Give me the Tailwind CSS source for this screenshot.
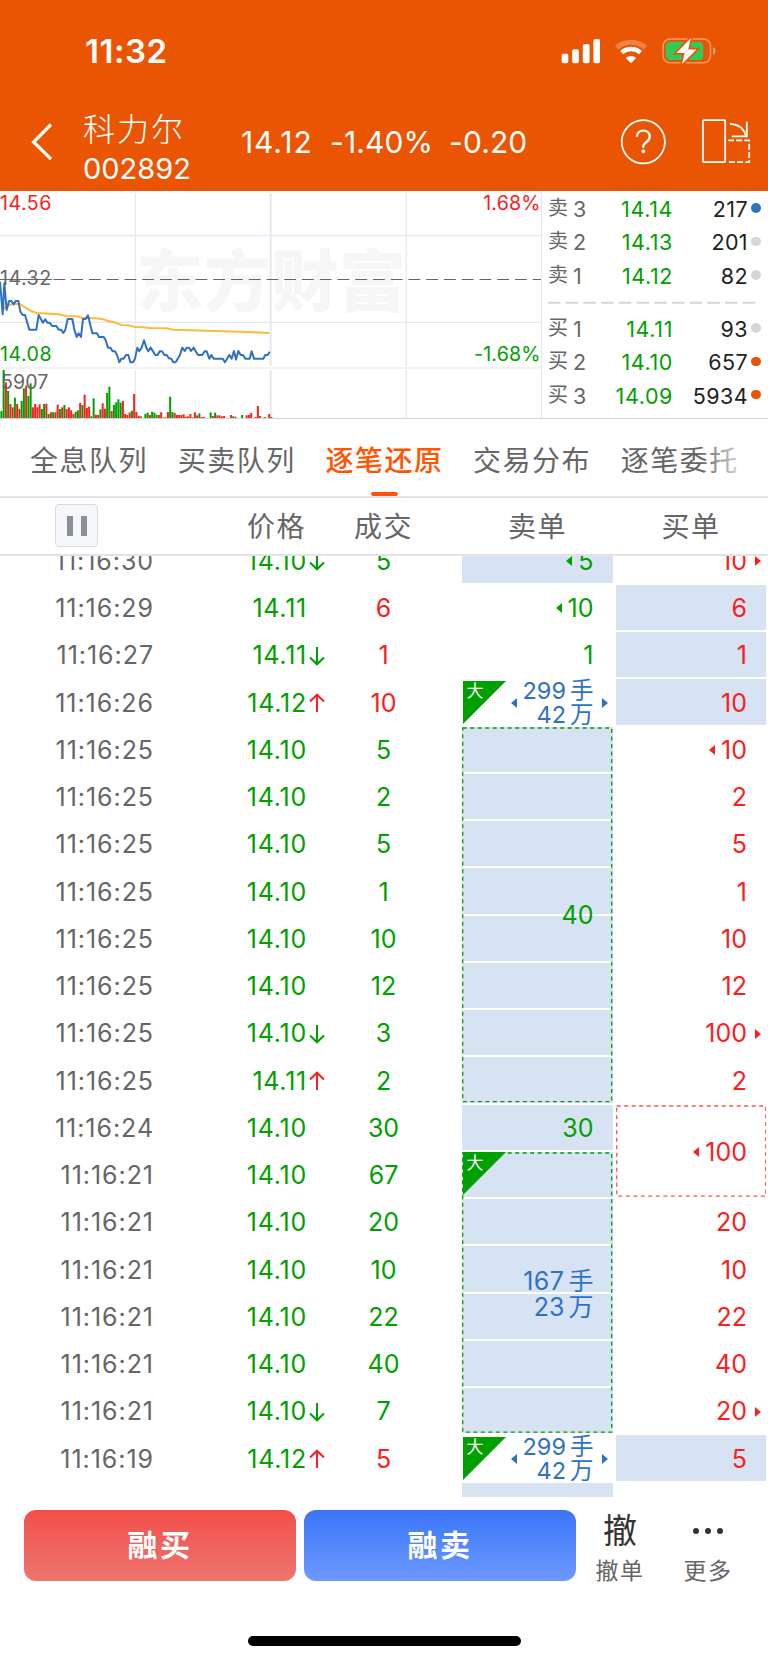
<!DOCTYPE html>
<html lang="zh-CN">
<head>
    <meta charset="UTF-8">
    <meta name="viewport" content="width=device-width, initial-scale=1.0">
    <script src="https://cdn.jsdelivr.net/npm/@tailwindcss/browser@4"></script>
    <title>科力尔 002892</title>
</head>
<body class="w-[768px] h-[1663px] overflow-hidden bg-white text-[#666] font-['Inter','Noto_Sans_CJK_SC',sans-serif] flex flex-col">

    <!-- Header -->
    <header class="h-[191px] shrink-0 bg-[#ea5504] text-white">
        <!-- Status bar -->
        <div class="h-[102px] flex items-center justify-between pl-[85px] pr-[51px]">
            <span class="text-[33px] font-semibold leading-none tracking-[0.5px]">11:32</span>
            <svg class="w-[156px] h-[28px]" viewBox="561 37 156 28" fill="none">
                <g fill="#fff">
                    <rect x="561.7" y="53.8" width="6.6" height="9.4" rx="2" />
                    <rect x="572.1" y="49.2" width="6.8" height="14" rx="2" />
                    <rect x="582.8" y="43.9" width="6.8" height="19.3" rx="2" />
                    <rect x="593.4" y="38.9" width="6.6" height="24.3" rx="2" />
                </g>
                <path d="M616.6 47.6a22 22 0 0 1 29 0" stroke="#f0814a" stroke-width="5" />
                <path d="M621.7 52.6a14.2 14.2 0 0 1 18.8 0" stroke="#fff" stroke-width="4.6" />
                <path d="M631 63.3l-5.2-5.3a7.6 7.6 0 0 1 10.4 0z" fill="#fff" />
                <rect x="663.1" y="39" width="47.4" height="23.8" rx="7" stroke="#f39a68" stroke-width="1.5" />
                <path d="M713 47.2c3.4 1 3.4 6.6 0 7.6z" fill="#f39a68" />
                <rect x="665.7" y="41.8" width="37.6" height="18.2" rx="4.4" fill="#34c759" />
                <path d="M691 38L676.3 53h8.400l-2.700 11L696.500 49.500h-8.300z" fill="#fff" stroke="#ea5504" stroke-width="3.400" paint-order="stroke" />
            </svg>
        </div>
        <!-- Title bar -->
        <div class="h-[88px] flex items-center pl-[30px] pr-[16px]">
            <svg class="w-6 h-10 mt-[-9px]" viewBox="30 122 24 40" fill="none" stroke="#fff" stroke-width="3.200"><path d="M51 124.5L33.6 142L51 159.2" /></svg>
            <div class="ml-[29px] w-[158px] mt-[6px]">
                <div class="text-[32px] leading-[39px] font-light tracking-[2px]">科力尔</div>
                <div class="text-[29px] leading-[39px] tracking-[0px]">002892</div>
            </div>
            <div class="flex text-[30px] leading-none mt-[-8px]">
                <span class="w-[89px] tracking-[0.9px]">14.12</span>
                <span class="w-[119px] tracking-[0.1px]">-1.40%</span>
                <span class="tracking-[0.1px]">-0.20</span>
            </div>
            <svg class="w-[134px] h-[48px] ml-auto mt-[-8px]" viewBox="618 118 134 48" fill="none" stroke="#fff" stroke-width="1.8">
                <circle cx="643.3" cy="141.8" r="21.6" />
                <path d="M637 136.8c0-3.7 2.7-6.2 6.3-6.2s6.4 2.4 6.4 5.8c0 2.8-1.4 4.3-3.5 5.8-2.1 1.4-3 2.5-3 4.9v.6" stroke-width="2.3" />
                <circle cx="643.3" cy="151.3" r="1.5" fill="#fff" stroke-width="1" />
                <rect x="703" y="120.2" width="22.2" height="42" rx="1" />
                <path d="M730 123.8c8 .3 14 4.500 16 12.500M746.800 121.700v14.600H731.800" />
                <path d="M728 140.300h21.200v21.900H728" stroke-dasharray="6 2.200" />
            </svg>
        </div>
    </header>

    <!-- Chart and order book -->
    <section class="h-[228px] shrink-0 flex border-b border-[#d4d5de]">
        <svg class="w-[542px] h-[227px] shrink-0 overflow-hidden" viewBox="0 1 542 227" fill="none">
            <text x="136" y="115.500" font-size="67" font-weight="900" fill="#f6f6f6" textLength="270">东方财富</text>
            <g stroke="#e5e8f0" stroke-width="1.2">
                <path d="M0 45.700H541M0 132.400H541M135.500 3V176M406.300 3V176M135.500 180V228M406.300 180V228" />
                <path d="M270.700 3V176M270.700 180V228" stroke-width="2" />
                <path d="M0 178H541M541.400 0V228" />
            </g>
            <path d="M0 89.500H52" stroke="#666" />
            <path d="M53.500 89.500H541" stroke="#666" stroke-width="1.200" stroke-dasharray="11.800 5.950" />
            <g id="volume"></g>
            <g transform="translate(0 -5) scale(.3333)" stroke-linejoin="round">
                <polyline stroke="#fdbb3c" stroke-width="6" points="8,340 12,372 22,362 40,357 60,357 75,367 95,379 110,384 150,386 175,388 200,393 230,394 245,398 290,400 310,403 325,408 340,411 365,420 385,421 405,426 430,427 450,429 500,430 520,434 575,436 640,438 720,440 760,442 808,444" />
                <polyline stroke="#2f72c0" stroke-width="6" points="0,290 8,388 13,295 20,375 27,348 34,348 41,358 47,348 55,348 61,380 68,390 75,390 88,434 109,434 116,390 129,413 136,403 142,413 149,413 156,423 169,423 176,434 183,434 190,444 196,434 203,402 217,402 223,434 230,456 236,445 243,456 249,402 257,402 264,391 277,445 291,445 297,456 311,456 317,466 324,488 331,488 338,499 345,499 351,510 358,532 364,521 371,521 378,510 385,510 391,532 399,532 405,521 412,488 418,499 425,488 432,466 439,488 445,499 452,488 466,510 473,510 479,499 486,499 493,510 500,510 507,520 514,521 520,532 527,532 540,510 547,488 554,498 560,488 567,488 573,498 581,488 594,510 607,510 614,499 620,499 628,521 634,510 641,521 668,521 675,532 688,510 695,521 702,498 708,524 715,498 722,510 729,510 736,521 749,521 755,499 762,521 790,521 796,510 803,510 809,500" />
            </g>
            <g font-size="19.600">
                <text x="0" y="20" fill="#fb2020" letter-spacing=".5">14.56</text>
                <text x="0" y="95" fill="#666" letter-spacing=".5">14.32</text>
                <text x="0" y="170.700" fill="#00a000" letter-spacing=".5">14.08</text>
                <text x="1" y="199" fill="#666" letter-spacing=".1">5907</text>
                <text x="540.800" y="20" fill="#fb2020" text-anchor="end" letter-spacing=".2">1.68%</text>
                <text x="540.800" y="170.700" fill="#00a000" text-anchor="end" letter-spacing=".2">-1.68%</text>
            </g>
        </svg>
        <div id="orderBook" class="flex-1 pt-[1.500px] pl-[6px]"></div>
    </section>

    <!-- Tabs -->
    <nav class="relative h-[79px] shrink-0 flex border-b-2 border-[#e2e3e9] pl-[30px] text-[28px] leading-[84px] tracking-[1.5px] whitespace-nowrap">
        <a class="w-[147.700px] shrink-0">全息队列</a>
        <a class="w-[147.700px] shrink-0">买卖队列</a>
        <a class="w-[147.700px] shrink-0 font-medium text-[#ff5500]">逐笔还原</a>
        <a class="w-[147.700px] shrink-0">交易分布</a>
        <a class="w-[140px] shrink-0">逐笔委托</a>
        <span class="absolute left-[370.500px] bottom-0 w-[27.500px] h-1 rounded-full bg-[#ff5500]"></span>
        <span class="absolute right-0 top-0 w-[68px] h-[74px] bg-linear-to-r from-white/0 to-white to-80%"></span>
    </nav>

    <!-- Table head -->
    <div class="h-[58px] shrink-0 flex items-center border-b-2 border-[#e2e3e9] pl-[55px] pt-[2px] text-[28px] tracking-[1.5px]">
        <button class="w-[43px] h-[43px] mt-[-3px] rounded-[4px] border border-[#d9dbe2] bg-[#f5f6f9] flex items-center justify-center gap-[8px]">
            <span class="w-[6px] h-5 bg-[#8d8d98]"></span>
            <span class="w-[6px] h-5 bg-[#8d8d98]"></span>
        </button>
        <span class="ml-[149px] w-[107px]">价格</span>
        <span class="w-[154px]">成交</span>
        <span class="w-[153.500px]">卖单</span>
        <span>买单</span>
    </div>

    <!-- Trades -->
    <main class="h-[940.500px] shrink-0 overflow-hidden">
        <div class="flex mt-[-19.360px] text-[25px]">
            <div id="trades" class="w-[462px] shrink-0"></div>
            <div id="sells" class="w-[150.500px] shrink-0 text-[#00a000]"></div>
            <div id="buys" class="w-[150px] shrink-0 ml-[3.500px] text-[#fb2020]"></div>
        </div>
    </main>

    <!-- Bottom bar -->
    <footer class="flex-1 pt-[13.500px] pl-6">
        <div class="flex text-center">
            <button class="w-[272px] h-[71px] rounded-[12px] bg-linear-to-b from-[#f24e49] to-[#ee746f] text-white text-[30px] font-bold tracking-[2.500px]">融买</button>
            <button class="w-[272px] h-[71px] ml-2 rounded-[12px] bg-linear-to-b from-[#3a75f8] to-[#6d99fe] text-white text-[30px] font-bold tracking-[2.500px]">融卖</button>
            <div class="w-[88px]">
                <div class="text-[34px] leading-[42px] text-[#333]">撤</div>
                <div class="text-[23px] leading-[38px] tracking-[1.500px]">撤单</div>
            </div>
            <div class="w-[88px]">
                <div class="h-[42px] flex items-center justify-center gap-[6px]">
                    <i class="size-[6px] rounded-full bg-[#333]"></i>
                    <i class="size-[6px] rounded-full bg-[#333]"></i>
                    <i class="size-[6px] rounded-full bg-[#333]"></i>
                </div>
                <div class="text-[23px] leading-[38px] tracking-[1.500px]">更多</div>
            </div>
        </div>
        <div class="w-[273.500px] h-[10px] mt-[46px] ml-[223.500px] rounded-full bg-black"></div>
    </footer>

    <script>
        const GREEN = '#00a000', RED = '#fb2020';

        // volume bars: slot, height, colour
        const bars = '0:21g 1:144g 2:107r 3:81g 4:42r 5:32r 6:61g 7:42r 8:27r 9:51g 10:89g 11:97r 12:66g 13:104g 14:32r 15:42r 16:32r 17:41r 18:27g 19:42g 20:43r 21:12g 22:17r 23:17g 24:17r 25:40r 26:27g 27:32r 28:39g 29:27r 30:32r 31:23r 32:12r 33:19g 34:23g 35:45r 36:39g 37:70r 38:30r 39:34r 40:5g 41:59g 42:10r 43:9r 44:26g 45:44r 46:28r 47:75g 48:94g 49:21r 50:39g 51:47g 52:56g 53:46g 54:51r 55:12r 56:9r 57:17r 58:22g 59:72r 60:18r 61:7r 62:5g 64:12g 65:16g 66:9r 67:19g 68:16g 69:10g 70:9r 71:17r 72:2g 73:2r 74:18r 75:64g 76:18g 77:15r 78:9r 79:9r 80:9r 81:11r 82:4g 83:5r 84:12r 85:2g 86:17r 87:8r 88:14g 89:3r 90:3r 93:17g 94:6r 95:16g 96:8r 97:8r 98:5r 99:6r 102:9r 103:5g 104:4r 107:9g 109:8r 110:9r 111:15r 113:3r 114:36r 115:6r 117:3g 119:12r 120:3r';
        document.getElementById('volume').innerHTML = bars.split(' ').map(b => {
            const [, slot, h, c] = b.match(/(\d+):(\d+)([gr])/);
            return `<rect x="${0.4 + slot * 2.25}" y="${228 - h / 3}" width="2" height="${h / 3}" fill="${c === 'g' ? GREEN : RED}" />`;
        }).join('');

        const dots = { blue: 'bg-[#2f72c4]', grey: 'bg-[#d3d6db]', orange: 'bg-[#ea5504]' };
        const level = ([side, n, price, qty, dot]) => `
            <div class="h-[33.400px] flex items-center text-[21.500px]">
                <span class="w-[42px] flex gap-[5px]"><span class="text-[20px]">${side}</span>${n}</span>
                <span class="w-[83px] text-right tracking-[0.6px] text-[#00a000]">${price}</span>
                <span class="w-[75px] text-right tracking-[0.4px] text-[#222]">${qty}</span>
                <i class="size-[9.500px] ml-[3px] mt-[-2px] rounded-full ${dots[dot]}"></i>
            </div>`;
        document.getElementById('orderBook').innerHTML =
            [['卖', 3, '14.14', 217, 'blue'], ['卖', 2, '14.13', 201, 'grey'], ['卖', 1, '14.12', 82, 'grey']].map(level).join('') +
            '<svg class="block w-[208px] h-[19.500px]"><path d="M0 9.800H208" stroke="#d3d5de" stroke-width="2" stroke-dasharray="12.500 5.200" /></svg>' +
            [['买', 1, '14.11', 93, 'grey'], ['买', 2, '14.10', 657, 'orange'], ['买', 3, '14.09', 5934, 'orange']].map(level).join('');

        // time, price, direction, volume, volume colour
        const trades = [
            ['11:16:30', '14.10', 'down', 5, 'g'],
            ['11:16:29', '14.11', '', 6, 'r'],
            ['11:16:27', '14.11', 'down', 1, 'r'],
            ['11:16:26', '14.12', 'up', 10, 'r'],
            ['11:16:25', '14.10', '', 5, 'g'],
            ['11:16:25', '14.10', '', 2, 'g'],
            ['11:16:25', '14.10', '', 5, 'g'],
            ['11:16:25', '14.10', '', 1, 'g'],
            ['11:16:25', '14.10', '', 10, 'g'],
            ['11:16:25', '14.10', '', 12, 'g'],
            ['11:16:25', '14.10', 'down', 3, 'g'],
            ['11:16:25', '14.11', 'up', 2, 'g'],
            ['11:16:24', '14.10', '', 30, 'g'],
            ['11:16:21', '14.10', '', 67, 'g'],
            ['11:16:21', '14.10', '', 20, 'g'],
            ['11:16:21', '14.10', '', 10, 'g'],
            ['11:16:21', '14.10', '', 22, 'g'],
            ['11:16:21', '14.10', '', 40, 'g'],
            ['11:16:21', '14.10', 'down', 7, 'g'],
            ['11:16:19', '14.12', 'up', 5, 'r'],
        ];
        const arrows = {
            '': '',
            down: '<svg class="w-[16px] h-[20px]" fill="none" stroke="#00a000" stroke-width="2"><path d="M8 1V18M1 11.500L8 18.300L15 11.500" /></svg>',
            up: '<svg class="w-[16px] h-[20px]" fill="none" stroke="#fb2020" stroke-width="2"><path d="M8 19V2M1 8.500L8 1.700L15 8.500" /></svg>',
        };
        document.getElementById('trades').innerHTML = trades.map(([time, price, dir, vol, c]) => `
            <div class="h-[47.260px] pt-[2.500px] flex items-center">
                <span class="w-[154px] text-right tracking-[0.95px]">${time}</span>
                <span class="w-[153px] text-right tracking-[0.75px] text-[#00a000]">${price}</span>
                <span class="w-[18px] pl-[2px] mt-[-1px]">${arrows[dir]}</span>
                <span class="w-[117px] text-center ${c === 'g' ? 'text-[#00a000]' : 'text-[#fb2020]'}">${vol}</span>
            </div>`).join('');

        const left = '<svg class="w-[6px] h-[10px] mr-[6px] mt-[-1px]" fill="currentColor"><path d="M6 0V10L0 5z" /></svg>';
        const right = '<svg class="absolute right-[5px] w-[6px] h-[10px] mt-[-1px]" fill="currentColor"><path d="M0 0V10L6 5z" /></svg>';
        const cell = ({ v = '', bg, l, r }) => `
            <div class="h-[47.260px] py-[1px]">
                <div class="relative h-full flex items-center justify-end pt-[2.500px] pr-[19px] ${bg ? 'bg-[#d7e3f3]' : ''}">${l ? left : ''}${v}${r ? right : ''}</div>
            </div>`;
        const corner = `
            <svg class="absolute left-[.5px] top-[1.500px] w-[43px] h-[43px]"><path d="M0 0H43L0 43z" fill="#00a000" /></svg>
            <span class="absolute left-[4.500px] top-0 text-[17px] leading-[24px] text-white">大</span>`;
        const frame = (h, stroke) => `<svg class="absolute inset-0 size-full"><rect x=".700" y="2" width="149" height="${h - 4.400}" fill="none" stroke="${stroke}" stroke-width="1.300" stroke-dasharray="4 3.500" /></svg>`;
        const block = `
            <div class="h-[47.260px] py-[1px]">
                <div class="relative h-full flex items-center justify-end pt-[2px] pr-[19px] text-[#2e72c4] text-[23.500px] leading-[24px] text-right">
                    ${corner}${left}<div><div>299<span class="ml-[4px] text-[23.500px]">手</span></div><div>42<span class="ml-[4px] text-[23.500px]">万</span></div></div>${right}
                </div>
            </div>`;
        // an order filled by several trades: one framed cell over n rows
        const merged = (n, body, bg, stroke) => `
            <div class="relative">
                ${Array(n).fill(cell({ bg })).join('')}
                ${frame(n * 47.26, stroke)}
                <div class="absolute inset-0 flex items-center justify-end pt-[3px] pr-[19px]">${body}</div>
            </div>`;

        document.getElementById('sells').innerHTML =
            cell({ v: 5, bg: true, l: true }) +
            cell({ v: 10, l: true }) +
            cell({ v: 1 }) +
            block +
            merged(8, '40', true, GREEN) +
            cell({ v: 30, bg: true }) +
            merged(6, corner + '<div class="text-right text-[#2e72c4] leading-[26px]"><div><span class="tracking-[0.5px]">167</span><span class="ml-[4px] text-[25px]">手</span></div><div>23<span class="ml-[4px] text-[25px]">万</span></div></div>', true, GREEN) +
            block +
            cell({ bg: true });

        document.getElementById('buys').innerHTML =
            cell({ v: 10, r: true }) +
            [6, 1, 10].map(v => cell({ v, bg: true })).join('') +
            cell({ v: 10, l: true }) +
            [2, 5, 1, 10, 12].map(v => cell({ v })).join('') +
            cell({ v: 100, r: true }) +
            cell({ v: 2 }) +
            merged(2, left + '100', false, '#fa5552') +
            [20, 10, 22, 40].map(v => cell({ v })).join('') +
            cell({ v: 20, r: true }) +
            cell({ v: 5, bg: true });
    </script>
</body>
</html>
